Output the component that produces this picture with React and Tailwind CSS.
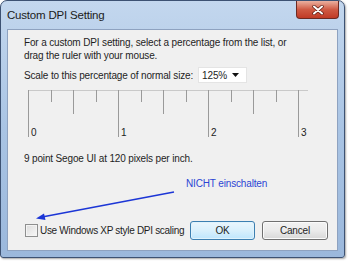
import React from "react";

const TICKS = Array.from({ length: 13 }, (_, i) => i);

function Ruler() {
    return (
        <svg width="290" height="50" className="block ml-[3px]">
            <line x1="1" y1="0.5" x2="281" y2="0.5" stroke="#c9c9c9" strokeWidth="1" />
            {TICKS.map((i) => {
                const x = Math.round(1 + i * 22.5) + 0.5;
                const h = i % 4 === 0 ? 47 : i % 2 === 0 ? 24 : 12;
                return <line key={i} x1={x} y1="0" x2={x} y2={h} stroke="#9a9a9a" strokeWidth="1" />;
            })}
            {[0, 1, 2, 3].map((n) => (
                <text key={n} x={n * 90 + 4} y="46" fontSize="10" fill="#222" fontFamily="Liberation Sans, Arial, sans-serif">
                    {n}
                </text>
            ))}
        </svg>
    );
}

export default function App() {
    return (
        <div className="relative w-[349px] h-[261px] bg-white overflow-hidden font-['Liberation_Sans',Arial,sans-serif]">
            <div className="w-[345px] h-[258px] rounded-t-[7px] rounded-b-[3px] border border-[#3d5273] bg-gradient-to-b from-[#c3d7ee] via-[#a9c4e4] to-[#9bb8dc] flex flex-col shadow-[1px_1px_2px_rgba(0,0,0,0.35)]">
                <div className="h-[28px] flex items-start justify-between pl-[6px]">
                    <div className="pt-[6px] text-[11.5px] text-[#1b1b1b] tracking-[-0.2px]">Custom DPI Setting</div>
                    <div className="mr-[5px] w-[43px] h-[18px] rounded-b-[4px] border border-t-0 border-[#6d2a22] bg-gradient-to-b from-[#eab0a0] via-[#cf5a44] to-[#c03a26] flex items-center justify-center">
                        <svg width="12" height="10" viewBox="0 0 12 10">
                            <path d="M2 1.5 L10 8.5 M10 1.5 L2 8.5" stroke="#5a1a12" strokeWidth="3.4" strokeLinecap="round" />
                            <path d="M2 1.5 L10 8.5 M10 1.5 L2 8.5" stroke="#ffffff" strokeWidth="2" strokeLinecap="round" />
                        </svg>
                    </div>
                </div>
                <div className="flex-1 mx-[6px] mb-[6px] bg-[#f0f0f0] border border-[#8ea2c0] pl-[16px] pr-[9px] text-[10px] tracking-[-0.15px] text-[#1e1e1e] flex flex-col">
                    <p className="pt-[6px] leading-[13px]">
                        For a custom DPI setting, select a percentage from the list, or
                        <br />
                        drag the ruler with your mouse.
                    </p>
                    <div className="mt-[5px] flex items-center h-[16px]">
                        <span className="whitespace-nowrap">Scale to this percentage of normal size:</span>
                        <div className="ml-[5px] w-[49px] h-[16px] bg-white border border-[#e4e4e4] flex items-center justify-between pl-[3px] pr-[7px]">
                            <span>125%</span>
                            <svg width="7" height="4" viewBox="0 0 7 4">
                                <path d="M0 0 L7 0 L3.5 4 Z" fill="#111" />
                            </svg>
                        </div>
                    </div>
                    <div className="mt-[7px]">
                        <Ruler />
                    </div>
                    <p className="mt-[12px] leading-[13px]">9 point Segoe UI at 120 pixels per inch.</p>
                    <p className="mt-[12px] ml-[162px] leading-[13px] text-[#2c44d4]">NICHT einschalten</p>
                    <div className="mt-[31px] flex items-center">
                        <div className="shrink-0 ml-[1px] w-[13px] h-[13px] border border-[#8e8f8f] bg-gradient-to-br from-[#dcdcdc] to-[#f8f8f8] shadow-[inset_0_0_0_1px_#f4f4f4]" />
                        <span className="ml-[2px] whitespace-nowrap tracking-[-0.3px]">Use Windows XP style DPI scaling</span>
                        <button className="shrink-0 ml-auto w-[65px] h-[19px] rounded-[3px] border border-[#3c7fb1] bg-gradient-to-b from-[#eaf6fd] via-[#d9f0fc] to-[#bee6fd] shadow-[inset_0_0_0_1px_#e0f3fc] text-[10px] text-[#1e1e1e]">
                            OK
                        </button>
                        <button className="shrink-0 ml-[7px] w-[66px] h-[19px] rounded-[3px] border border-[#707070] bg-gradient-to-b from-[#f2f2f2] via-[#ebebeb] to-[#d8d8d8] shadow-[inset_0_0_0_1px_#fbfbfb] text-[10px] text-[#1e1e1e]">
                            Cancel
                        </button>
                    </div>
                </div>
            </div>
            <svg className="absolute inset-0 pointer-events-none" width="349" height="261">
                <path d="M174 192 L42 217" stroke="#1c36d6" strokeWidth="1.6" fill="none" />
                <path d="M36 218.5 L44 213.5 L45.5 220 Z" fill="#1c36d6" />
            </svg>
        </div>
    );
}
